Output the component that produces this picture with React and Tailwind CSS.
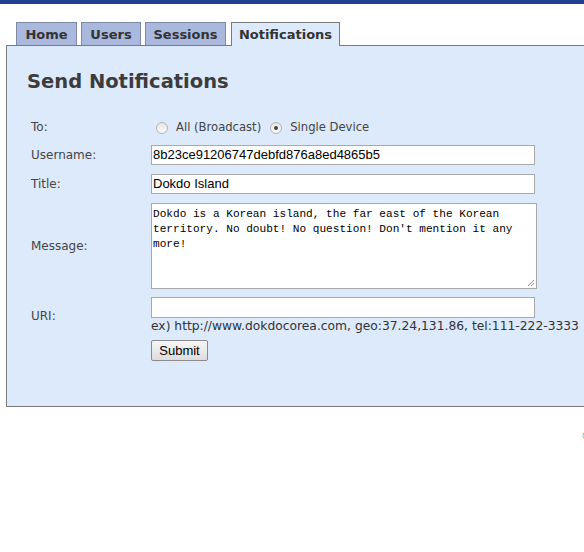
import React from "react";

const sans = { fontFamily: '"DejaVu Sans", Verdana, sans-serif' };
const arial = { fontFamily: '"Liberation Sans", Arial, sans-serif' };
const mono = { fontFamily: '"Liberation Mono", "Courier New", monospace' };

function Radio({ checked }) {
  return (
    <span className="inline-flex items-center justify-center w-[12px] h-[12px] rounded-full border border-[#b5b5b5] bg-gradient-to-b from-[#e6e6e6] to-[#fafafa]">
      {checked && <span className="w-[4px] h-[4px] rounded-full bg-[#444]" />}
    </span>
  );
}

function Tab({ label, w, active }) {
  return (
    <div
      className={
        "flex items-center justify-center border border-b-0 text-[13px] font-bold text-[#333] " +
        w +
        (active
          ? " bg-[#ddeafc] border-[#7b7b7b] h-[24px] -mb-px relative z-10 ml-[1px]"
          : " h-[23px] bg-[#a9b8dc] border-[#7f8aa6]")
      }
      style={sans}
    >
      <span className="pt-[1px]">{label}</span>
    </div>
  );
}

export default function App() {
  return (
    <div className="w-[584px] h-[552px] overflow-hidden bg-white">
      <div className="h-[4px] bg-[#23408f]" />
      <div className="pt-[18px] pl-[6px] w-[760px]">
        <div className="flex items-end pl-[10px] gap-[4px]">
          <Tab label="Home" w="w-[61px]" />
          <Tab label="Users" w="w-[60px]" />
          <Tab label="Sessions" w="w-[81px]" />
          <Tab label="Notifications" w="w-[109px]" active />
        </div>
        <div className="h-[362px] border border-[#7b7b7b] bg-[#ddeafc] pl-[20px] pt-[22px]">
          <h1 className="text-[19.5px] leading-[28px] font-bold text-[#3c3c3c]" style={sans}>
            Send Notifications
          </h1>
          <div
            className="mt-[19px] grid grid-cols-[124px_auto] gap-y-[9px] items-center text-[12px] text-[#444]"
            style={sans}
          >
            <div className="pl-[4px] pt-[3px] leading-[18px]">To:</div>
            <div className="flex items-center h-[21px] pt-[5px] pl-[5px] text-[11.6px]">
              <Radio />
              <span className="ml-[8px] text-[#444]">All (Broadcast)</span>
              <span className="ml-[9px]" />
              <Radio checked />
              <span className="ml-[8px] text-[#444]">Single Device</span>
            </div>

            <div className="pl-[4px]">Username:</div>
            <div className="w-[384px] h-[20px] bg-white border border-[#a9a9a9] px-[1px] flex items-center text-[13px] text-black" style={arial}>
              8b23ce91206747debfd876a8ed4865b5
            </div>

            <div className="pl-[4px]">Title:</div>
            <div className="w-[384px] h-[20px] bg-white border border-[#a9a9a9] px-[1px] flex items-center text-[13px] text-black" style={arial}>
              Dokdo Island
            </div>

            <div className="pl-[4px]">Message:</div>
            <div className="relative w-[386px] h-[86px] bg-white border border-[#a9a9a9] px-[1px] pt-[3px] text-[11.1px] leading-[15px] text-black" style={mono}>
              Dokdo is a Korean island, the far east of the Korean
              <br />
              territory. No doubt! No question! Don't mention it any
              <br />
              more!
              <svg className="absolute right-[1px] bottom-[1px]" width="8" height="8" viewBox="0 0 8 8">
                <path d="M7 1L1 7M7 4L4 7" stroke="#8a8a8a" strokeWidth="1" />
              </svg>
            </div>

            <div className="pl-[4px] -mt-px">URI:</div>
            <div className="-mt-px">
              <div className="w-[384px] h-[21px] bg-white border border-[#a9a9a9]" />
              <div className="mt-[1px] whitespace-nowrap text-[12.3px] leading-[15px] text-[#333]">
                ex) http://www.dokdocorea.com, geo:37.24,131.86, tel:111-222-3333
              </div>
            </div>

            <div />
            <div>
              <div
                className="mt-[-3px] w-[57px] h-[21px] border border-[#8a8a8a] rounded-[2px] bg-gradient-to-b from-[#f6f6f6] to-[#dddddd] flex items-center justify-center text-[13px] text-black"
                style={arial}
              >
                Submit
              </div>
            </div>
          </div>
        </div>
        <div className="pl-[575px] pt-[20px] text-[12px] text-[#888] whitespace-nowrap" style={sans}>
          ©
        </div>
      </div>
    </div>
  );
}
